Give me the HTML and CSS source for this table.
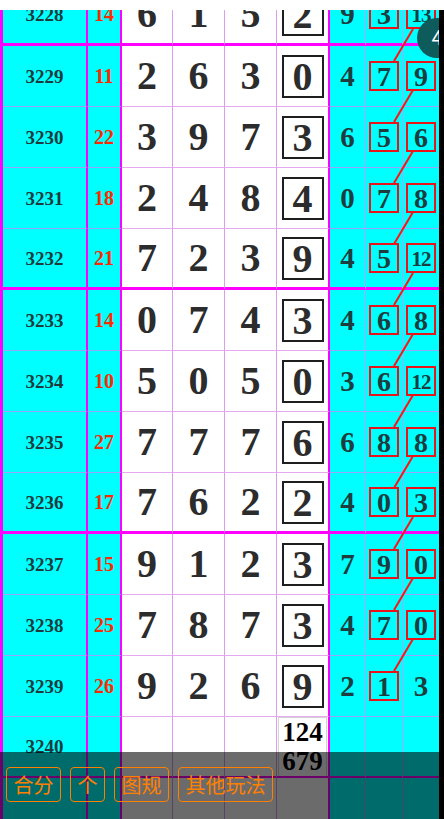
FILE: index.html
```html
<!DOCTYPE html>
<html lang="zh">
<head>
<meta charset="utf-8">
<title>走势图</title>
<link rel="stylesheet" href="styles.css">
</head>
<body>
<div class="topgap"></div>
<div class="viewport">
  <div class="table">
    <div class="row end"><div class="n">3228</div><div class="s">14</div><div class="w">6</div><div class="w">1</div><div class="w">5</div><div class="d"><span class="bx">2</span></div><div class="e">9</div><div class="f"><span class="rb">3</span></div><div class="g"><span class="rb two">13</span></div></div>
    <div class="row"><div class="n">3229</div><div class="s">11</div><div class="w">2</div><div class="w">6</div><div class="w">3</div><div class="d"><span class="bx">0</span></div><div class="e">4</div><div class="f"><span class="rb">7</span></div><div class="g"><span class="rb">9</span></div></div>
    <div class="row"><div class="n">3230</div><div class="s">22</div><div class="w">3</div><div class="w">9</div><div class="w">7</div><div class="d"><span class="bx">3</span></div><div class="e">6</div><div class="f"><span class="rb">5</span></div><div class="g"><span class="rb">6</span></div></div>
    <div class="row"><div class="n">3231</div><div class="s">18</div><div class="w">2</div><div class="w">4</div><div class="w">8</div><div class="d"><span class="bx">4</span></div><div class="e">0</div><div class="f"><span class="rb">7</span></div><div class="g"><span class="rb">8</span></div></div>
    <div class="row end"><div class="n">3232</div><div class="s">21</div><div class="w">7</div><div class="w">2</div><div class="w">3</div><div class="d"><span class="bx">9</span></div><div class="e">4</div><div class="f"><span class="rb">5</span></div><div class="g"><span class="rb two">12</span></div></div>
    <div class="row"><div class="n">3233</div><div class="s">14</div><div class="w">0</div><div class="w">7</div><div class="w">4</div><div class="d"><span class="bx">3</span></div><div class="e">4</div><div class="f"><span class="rb">6</span></div><div class="g"><span class="rb">8</span></div></div>
    <div class="row"><div class="n">3234</div><div class="s">10</div><div class="w">5</div><div class="w">0</div><div class="w">5</div><div class="d"><span class="bx">0</span></div><div class="e">3</div><div class="f"><span class="rb">6</span></div><div class="g"><span class="rb two">12</span></div></div>
    <div class="row"><div class="n">3235</div><div class="s">27</div><div class="w">7</div><div class="w">7</div><div class="w">7</div><div class="d"><span class="bx">6</span></div><div class="e">6</div><div class="f"><span class="rb">8</span></div><div class="g"><span class="rb">8</span></div></div>
    <div class="row end"><div class="n">3236</div><div class="s">17</div><div class="w">7</div><div class="w">6</div><div class="w">2</div><div class="d"><span class="bx">2</span></div><div class="e">4</div><div class="f"><span class="rb">0</span></div><div class="g"><span class="rb">3</span></div></div>
    <div class="row"><div class="n">3237</div><div class="s">15</div><div class="w">9</div><div class="w">1</div><div class="w">2</div><div class="d"><span class="bx">3</span></div><div class="e">7</div><div class="f"><span class="rb">9</span></div><div class="g"><span class="rb">0</span></div></div>
    <div class="row"><div class="n">3238</div><div class="s">25</div><div class="w">7</div><div class="w">8</div><div class="w">7</div><div class="d"><span class="bx">3</span></div><div class="e">4</div><div class="f"><span class="rb">7</span></div><div class="g"><span class="rb">0</span></div></div>
    <div class="row"><div class="n">3239</div><div class="s">26</div><div class="w">9</div><div class="w">2</div><div class="w">6</div><div class="d"><span class="bx">9</span></div><div class="e">2</div><div class="f"><span class="rb">1</span></div><div class="g">3</div></div>
    <div class="row end"><div class="n">3240</div><div class="s"></div><div class="w"></div><div class="w"></div><div class="w"></div><div class="d top"><div class="pair">124<br>679</div></div><div class="e"></div><div class="f"></div><div class="g"></div></div>
    <div class="row"><div class="n"></div><div class="s"></div><div class="w"></div><div class="w"></div><div class="w"></div><div class="d"></div><div class="e"></div><div class="f"></div><div class="g"></div></div>

    <svg class="links" width="439" height="860" viewBox="0 0 439 860">
      <g stroke="#ff1414" stroke-width="2" fill="none">
        <line x1="413" y1="44" x2="394" y2="76"/>
        <line x1="413" y1="105" x2="394" y2="137"/>
        <line x1="413" y1="166" x2="394" y2="198"/>
        <line x1="413" y1="227" x2="394" y2="259"/>
        <line x1="413" y1="288" x2="394" y2="320"/>
        <line x1="413" y1="349" x2="394" y2="381"/>
        <line x1="413" y1="410" x2="394" y2="442"/>
        <line x1="413" y1="471" x2="394" y2="503"/>
        <line x1="413" y1="532" x2="394" y2="564"/>
        <line x1="413" y1="593" x2="394" y2="625"/>
        <line x1="413" y1="654" x2="394" y2="686"/>
      </g>
    </svg>
    <div class="fab">4</div>
  </div>
  <div class="dock">
    <span class="btn">合分</span>
    <span class="btn">个</span>
    <span class="btn">图规</span>
    <span class="btn">其他玩法</span>
  </div>
</div>
</body>
</html>
```
FILE: styles.css
```css
html, body {
  margin: 0;
  padding: 0;
  background: #fff;
}
body {
  width: 444px;
  height: 819px;
  overflow: hidden;
  font-family: "Liberation Serif", "Times New Roman", serif;
}
.topgap {
  height: 10px;
  background: #fff;
}
.viewport {
  position: relative;
  height: 809px;
  width: 444px;
  background: #000;
  overflow: hidden;
}
.table {
  position: relative;
  width: 439px;
  margin-top: -25px;
  overflow: hidden;
}
.row {
  display: grid;
  grid-template-columns: 85px 34px 51px 52px 52px 53px 36px 37px 36px;
  height: 61px;
  border-left: 3px solid #ff00ff;
}
.row > div {
  box-sizing: border-box;
  display: flex;
  align-items: center;
  justify-content: center;
  font-weight: bold;
  line-height: 1;
}
.n, .s {
  background: #00ffff;
  border-right: 2px solid #ff00ff;
  border-bottom: 1px solid #99a4ff;
}
.n {
  font-size: 19px;
  color: #1f3a3c;
}
.s {
  font-size: 20px;
  color: #ff2a00;
}
.w, .d {
  background: #fff;
  border-bottom: 1px solid #e6a8f0;
  font-size: 40px;
  color: #2c2c2c;
}
.w {
  border-right: 1px solid #de9cee;
}
.d {
  border-right: 2px solid #ff00ff;
}
.e, .f, .g {
  background: #00ffff;
  border-bottom: 1px solid #99a4ff;
  color: #1d3d3e;
  font-size: 29px;
}
.e, .f {
  border-right: 1px solid #a2a8ff;
}
.row.end > div {
  border-bottom: 3px solid #ff00ff;
}
.bx {
  box-sizing: border-box;
  width: 42px;
  height: 43px;
  border: 2px solid #1e1e1e;
  display: flex;
  align-items: center;
  justify-content: center;
  padding-top: 2px;
}
.rb {
  box-sizing: border-box;
  width: 30px;
  height: 30px;
  border: 2px solid #e8141a;
  display: flex;
  align-items: center;
  justify-content: center;
  font-size: 28px;
  padding-top: 2px;
}
.rb.two {
  font-size: 21px;
  letter-spacing: -1px;
}
.row > .d.top {
  align-items: stretch;
  justify-content: stretch;
}
.pair {
  flex: 1;
  margin: 0 1px 0 1px;
  border: 1px solid #d4d4d4;
  border-bottom: none;
  font-size: 27px;
  line-height: 29px;
  color: #000;
  text-align: center;
}
.links {
  position: absolute;
  left: 0;
  top: 0;
  pointer-events: none;
}
.fab {
  position: absolute;
  left: 417px;
  top: 33px;
  width: 40px;
  height: 40px;
  border-radius: 50%;
  background: #0d5b5b;
  color: #fff;
  font-family: "Roboto", "Liberation Sans", sans-serif;
  font-size: 20px;
  line-height: 40px;
  text-align: center;
}
.dock {
  position: absolute;
  left: 0;
  right: 0;
  bottom: 0;
  height: 67px;
  box-sizing: border-box;
  padding: 15px 0 0 6px;
  background: rgba(0, 0, 0, 0.58);
  display: flex;
  align-items: flex-start;
  gap: 9px;
}
.btn {
  box-sizing: border-box;
  height: 35px;
  padding: 0 6.5px;
  border: 1px solid #ff8000;
  border-radius: 4px;
  color: #ff8000;
  font-family: "Noto Sans CJK SC", "Noto Sans", sans-serif;
  font-size: 20px;
  line-height: 33px;
}
```
